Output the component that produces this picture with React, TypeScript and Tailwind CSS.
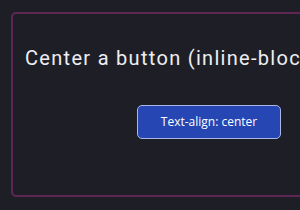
import React from 'react'

export default function App() {
  return (
    <div className="w-[300px] h-[210px] overflow-hidden bg-[#1e1f26] pt-[12px] pl-[11px]">
      <div className="w-[396px] h-[185px] rounded-[5px] border-2 border-[#5e2753] px-[12px] pt-[31px]">
        <h1
          className="text-[20px] leading-[26px] tracking-[1.3px] text-[#eeeef2] whitespace-nowrap"
          style={{ fontFamily: 'Roboto, sans-serif' }}
        >
          Center a button (inline-block)
        </h1>
        <div className="mt-[34px] text-center">
          <button
            className="inline-block w-[144px] h-[34px] rounded-[5px] border border-[#a9b6e6] bg-[#2546b3] text-[12px] text-white"
            style={{ fontFamily: '"Open Sans", sans-serif' }}
          >
            Text-align: center
          </button>
        </div>
      </div>
    </div>
  )
}
